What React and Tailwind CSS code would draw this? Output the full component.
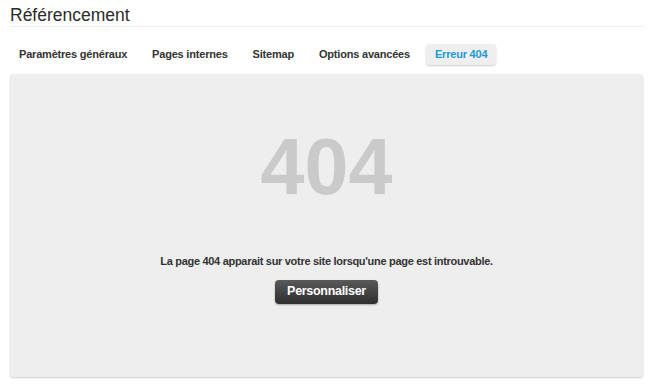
export default function App() {
  const tabs = ["Paramètres généraux", "Pages internes", "Sitemap", "Options avancées", "Erreur 404"];
  const active = "Erreur 404";

  return (
    <div className="w-[654px] h-[389px] bg-white px-[10px] pt-[4px] font-['Liberation_Sans',Arial,sans-serif] text-[#333]">
      <h1 className="text-[17.5px] leading-[22px] text-[#2b2b2b] border-b border-[#ededed]">Référencement</h1>

      <div className="flex items-center gap-[7px] mt-[16px] h-[22px]">
        {tabs.map((t) => (
          <span
            key={t}
            className={`h-[21px] px-[9px] flex items-center text-[11px] tracking-[-0.2px] font-bold rounded-[4px] ${
              t === active ? "bg-[#efefef] text-[#1e9ad6] shadow-[0_1px_2px_rgba(0,0,0,0.2)]" : "text-[#333]"
            }`}
          >
            {t}
          </span>
        ))}
      </div>

      <div className="mt-[9px] h-[303px] w-[633px] bg-[#eeeeee] rounded-[3px] shadow-[0_1px_2px_rgba(0,0,0,0.2)] flex flex-col items-center">
        <div className="mt-[53px] text-[79px] leading-[80px] font-bold text-[#cacaca]">404</div>
        <p className="mt-[46px] text-[11px] tracking-[-0.3px] font-bold text-[#333]">
          La page 404 apparait sur votre site lorsqu'une page est introuvable.
        </p>
        <button className="mt-[10px] h-[24px] px-[12px] rounded-[4px] bg-gradient-to-b from-[#5a5a5a] to-[#2e2e2e] text-white text-[12.5px] tracking-[-0.3px] font-bold shadow-[0_1px_2px_rgba(0,0,0,0.3)]">
          Personnaliser
        </button>
      </div>
    </div>
  );
}
